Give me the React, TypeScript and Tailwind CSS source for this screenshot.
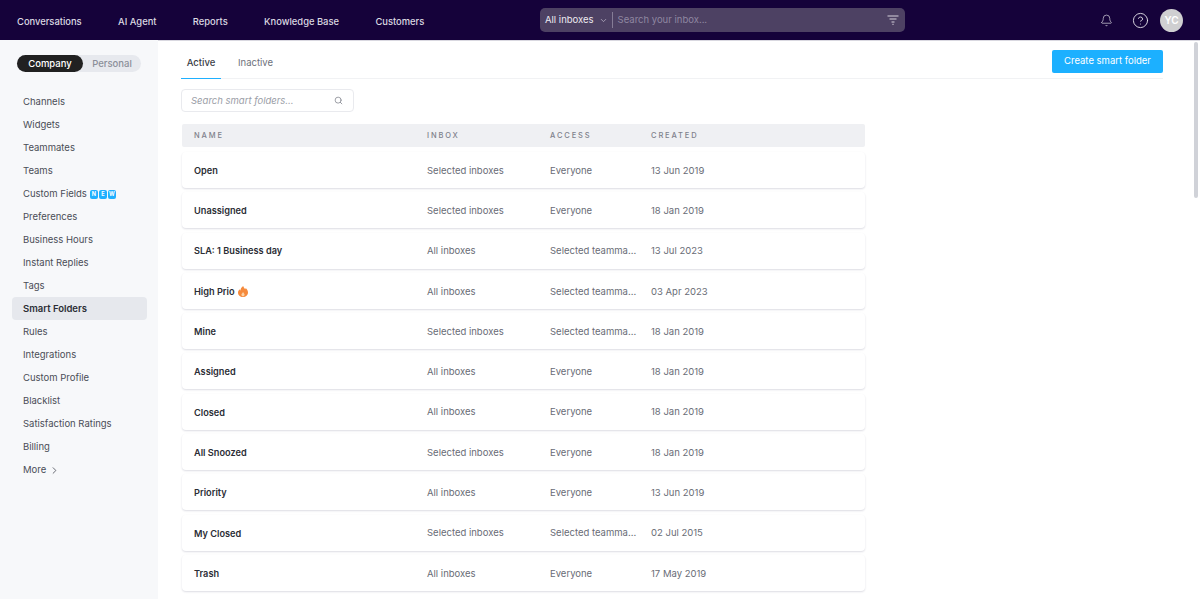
import { useState } from 'react';
import { Bell, ChevronDown, ChevronRight, CircleHelp, Search } from 'lucide-react';

const navLinks = ['Conversations', 'AI Agent', 'Reports', 'Knowledge Base', 'Customers'];

const sideLinks = [
  'Channels',
  'Widgets',
  'Teammates',
  'Teams',
  'Custom Fields',
  'Preferences',
  'Business Hours',
  'Instant Replies',
  'Tags',
  'Smart Folders',
  'Rules',
  'Integrations',
  'Custom Profile',
  'Blacklist',
  'Satisfaction Ratings',
  'Billing',
  'More',
];

const folders = [
  { name: 'Open', inbox: 'Selected inboxes', access: 'Everyone', created: '13 Jun 2019' },
  { name: 'Unassigned', inbox: 'Selected inboxes', access: 'Everyone', created: '18 Jan 2019' },
  { name: 'SLA: 1 Business day', inbox: 'All inboxes', access: 'Selected teamma...', created: '13 Jul 2023' },
  { name: 'High Prio', inbox: 'All inboxes', access: 'Selected teamma...', created: '03 Apr 2023', fire: true },
  { name: 'Mine', inbox: 'Selected inboxes', access: 'Selected teamma...', created: '18 Jan 2019' },
  { name: 'Assigned', inbox: 'All inboxes', access: 'Everyone', created: '18 Jan 2019' },
  { name: 'Closed', inbox: 'All inboxes', access: 'Everyone', created: '18 Jan 2019' },
  { name: 'All Snoozed', inbox: 'Selected inboxes', access: 'Everyone', created: '18 Jan 2019' },
  { name: 'Priority', inbox: 'All inboxes', access: 'Everyone', created: '13 Jun 2019' },
  { name: 'My Closed', inbox: 'Selected inboxes', access: 'Selected teamma...', created: '02 Jul 2015' },
  { name: 'Trash', inbox: 'All inboxes', access: 'Everyone', created: '17 May 2019' },
];

function FilterIcon() {
  return (
    <svg width="12" height="10" viewBox="0 0 12 10" fill="none" stroke="#d5d1dc" strokeWidth="1.2">
      <path d="M0.5 1h11M2.5 4h7M4.5 7h3" />
      <path d="M5.5 9.4h1" />
    </svg>
  );
}

function Flame() {
  return (
    <svg width="10" height="11" viewBox="0 0 10 11">
      <path
        d="M5.2 0c.4 1.6 1.2 2.3 2 3.2.3-.3.5-.7.5-1.1C9 3.300 10 4.900 10 6.500 10 9 7.900 11 5 11S0 9 0 6.700c0-1.500.8-2.500 1.700-3.400.1.600.3 1 .7 1.300C2.500 2.800 3.500 1 5.200 0z"
        fill="#f58a3c"
      />
      <path d="M5 6c.3.8 1.600 1.400 1.600 2.800 0 .9-.7 1.500-1.600 1.500s-1.600-.6-1.600-1.500C3.400 7.600 4.600 7.200 5 6z" fill="#fbd3a8" />
    </svg>
  );
}

export default function App() {
  const [scope] = useState('Company');

  return (
    <div className="h-[599px] w-[1200px] overflow-hidden bg-white font-['Inter',sans-serif] relative">
      <header className="flex h-[40px] items-center bg-[#15023a] border-b border-[#d9d8e0] box-content -mb-px">
        <nav className="flex w-[530px] items-center gap-[36.4px] pl-[17px] pt-[4px] text-[9.4px] font-medium text-[#dcdae2]">
          {navLinks.map((link) => (
            <span key={link}>{link}</span>
          ))}
        </nav>
        <div className="ml-[10px] flex h-[24px] w-[365px] items-center rounded-[5px] bg-[#4d4163] pl-[5px] pr-[6px] text-[9.5px]">
          <span className="text-[#eceaf0]">All inboxes</span>
          <ChevronDown size={9} className="ml-[5px] text-[#b9b3c5]" />
          <div className="ml-[4px] h-[16px] w-px bg-[#857c96]" />
          <span className="ml-[5px] flex-1 text-[#8f87a1]">Search your inbox...</span>
          <FilterIcon />
        </div>
        <div className="ml-auto flex items-center pr-[17px]">
          <Bell size={13} strokeWidth={1.3} className="text-[#d8d5df]" />
          <CircleHelp size={17} strokeWidth={1.3} className="ml-[19px] text-[#e4e2e9]" />
          <div className="ml-[11px] flex h-[23px] w-[23px] items-center justify-center rounded-full bg-[#cfcfd1] text-[10px] font-semibold text-white">
            YC
          </div>
        </div>
      </header>

      <div className="flex h-[559px]">
        <aside className="w-[158px] shrink-0 bg-[#f7f8fa] pl-[12px] pr-[11px] pt-[15px]">
          <div className="ml-[5px] flex h-[17px] w-[124px] items-center rounded-full bg-[#e7e9ee] text-[9.5px] font-medium">
            <span className="flex h-full w-[66px] items-center justify-center rounded-full bg-[#212121] pt-px text-white">
              {scope}
            </span>
            <span className="flex-1 pt-px text-center text-[#8b8f99]">Personal</span>
          </div>
          <ul className="mt-[18px] text-[9.5px] text-[#4a4d57]">
            {sideLinks.map((link) => (
              <li
                key={link}
                className={`flex h-[23px] items-center rounded-[4px] pl-[11px] pt-[2px] ${
                  link === 'Smart Folders' ? 'bg-[#e6e8ed] font-semibold text-[#2c2e36]' : ''
                }`}
              >
                {link}
                {link === 'Custom Fields' && (
                  <span className="ml-[3px] flex gap-px">
                    {['N', 'E', 'W'].map((c) => (
                      <span
                        key={c}
                        className="flex h-[9px] w-[8px] items-center justify-center rounded-[2px] bg-[#1fb0ff] text-[5.5px] font-bold text-white"
                      >
                        {c}
                      </span>
                    ))}
                  </span>
                )}
                {link === 'More' && <ChevronRight size={11} strokeWidth={1.8} className="ml-[3px]" />}
              </li>
            ))}
          </ul>
        </aside>

        <main className="min-w-0 flex-1 pl-[23px] pr-[37px]">
          <div className="flex h-[39px] items-end justify-between border-b border-[#f1f2f4]">
            <div className="flex text-[9.5px]">
              <span className="-mb-px flex h-[29px] w-[40px] items-start justify-center border-b-[1.5px] border-[#1fb0ff] pt-[6px] font-medium text-[#3a3d46]">
                Active
              </span>
              <span className="ml-[17px] pt-[6px] text-[#6d717b]">Inactive</span>
            </div>
            <button className="mb-[5px] h-[23px] w-[111px] rounded-[2px] bg-[#1cb0ff] text-[9.5px] text-white">
              Create smart folder
            </button>
          </div>

          <div className="mt-[10px] flex h-[23px] w-[173px] items-center justify-between rounded-[4px] border border-[#e9eaee] pl-[9px] pr-[10px] text-[9.5px] italic text-[#9a9da6]">
            <span className="pt-px">Search smart folders...</span>
            <Search size={9} strokeWidth={2} className="text-[#7d808a]" />
          </div>

          <div className="ml-px mt-[12px] w-[683px]">
            <div className="flex h-[23px] items-center rounded-[2px] bg-[#eff0f3] pt-px text-[7.5px] font-medium tracking-[0.25em] text-[#7e818b]">
              <span className="w-[245px] pl-[12px]">NAME</span>
              <span className="w-[123px]">INBOX</span>
              <span className="w-[101px]">ACCESS</span>
              <span>CREATED</span>
            </div>
            <div className="mt-[5px] flex flex-col gap-[4.3px]">
              {folders.map((folder) => (
                <div
                  key={folder.name}
                  className="flex h-[36px] shrink-0 items-center rounded-[4px] bg-white pt-[1.5px] text-[9.5px] text-[#696c76] shadow-[0_1px_2px_rgba(40,40,80,0.16)]"
                >
                  <span className="flex w-[245px] items-center gap-[3px] pl-[12px] text-[9.2px] font-semibold text-[#2b2d35]">
                    {folder.name}
                    {folder.fire && <Flame />}
                  </span>
                  <span className="w-[123px]">{folder.inbox}</span>
                  <span className="w-[101px]">{folder.access}</span>
                  <span>{folder.created}</span>
                </div>
              ))}
            </div>
          </div>
        </main>
      </div>

      <div className="absolute right-[2px] top-[42px] h-[156px] w-[4px] rounded-full bg-[#d0d2d8]" />
    </div>
  );
}
